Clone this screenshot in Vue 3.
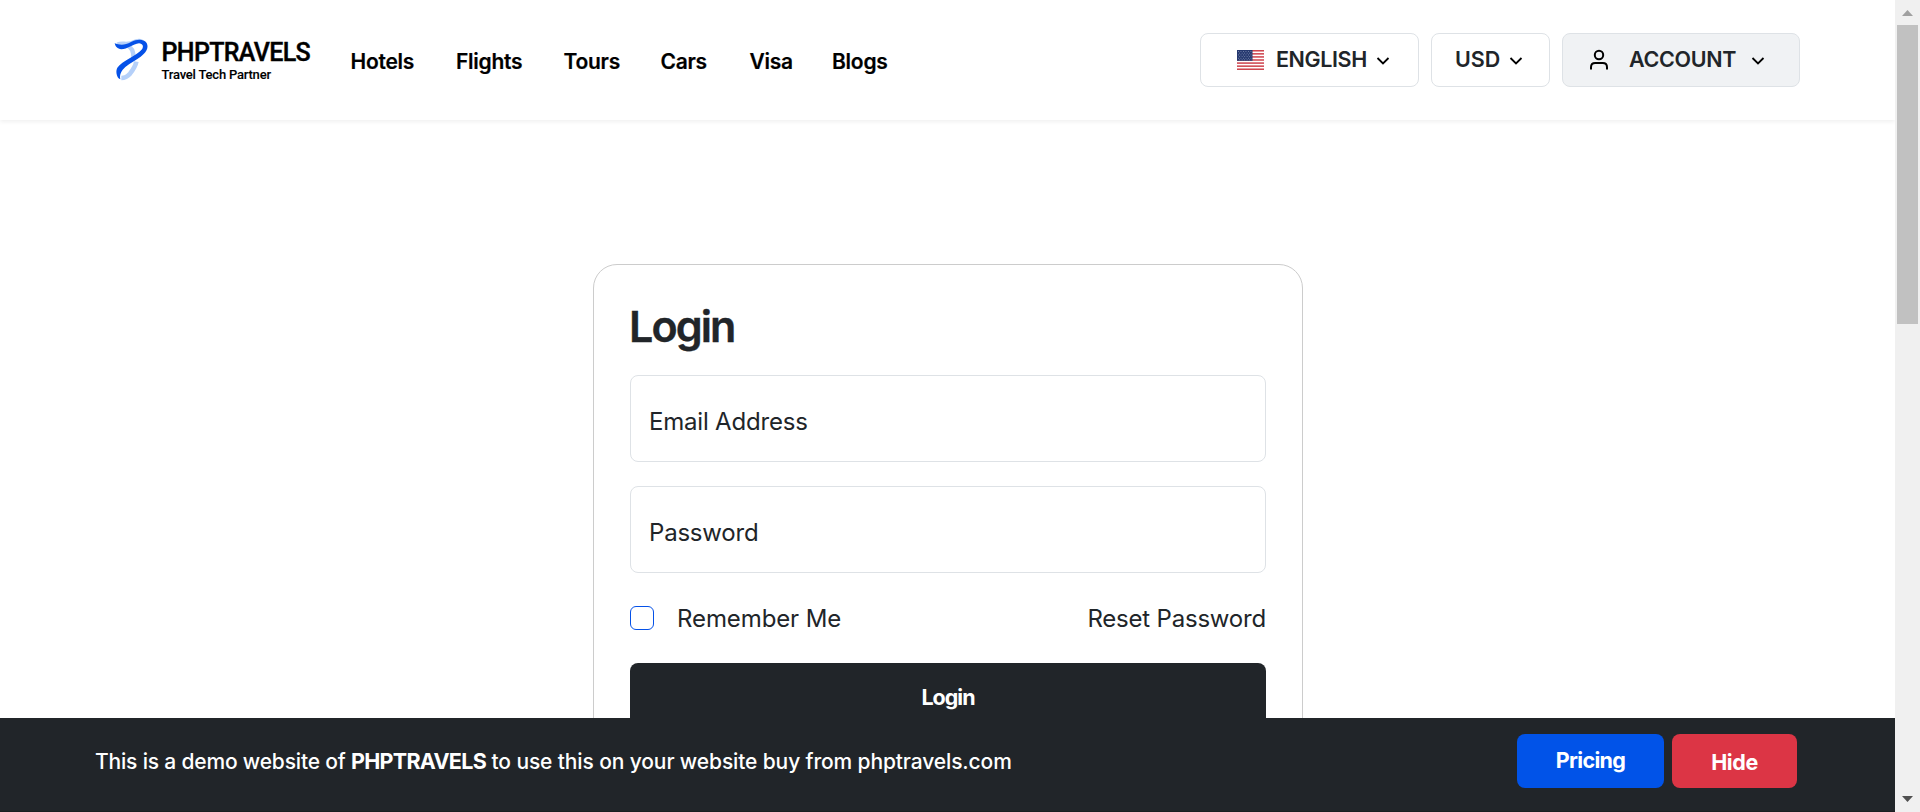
<script setup>
const nav = ['Hotels', 'Flights', 'Tours', 'Cars', 'Visa', 'Blogs']
const stripes = [0, 2, 4, 6, 8, 10, 12]
</script>

<template>
  <div class="window">
    <div class="page">
      <header class="header">
        <a class="brand">
          <svg class="mark" viewBox="25 20 111 132" fill="none">
            <path d="M38 41C50 36 62 41 76 38C88 34 98 26 112 32" stroke="#b5d0f9" stroke-width="10" />
            <path d="M66 44C80 50 88 62 86 84" stroke="#b5d0f9" stroke-width="13" />
            <path d="M95 94C92 110 84 120 76 130C69 138 60 143 50 143" stroke="#b5d0f9" stroke-width="14" />
            <path d="M30 39C44 44 60 46 79 35C98 25 118 26 126 38C134 54 122 68 108 79C94 90 76 98 62 110C50 121 44 132 47 147C34 141 33 120 38 112C52 92 98 76 112 57C118 48 114 40 103 39C85 41 68 57 50 57C38 56 32 48 30 39Z" fill="#0551e8" />
          </svg>
          <span class="brand-text">
            <span class="name">PHPTRAVELS</span>
            <span class="tagline">Travel Tech Partner</span>
          </span>
        </a>
        <nav class="nav">
          <a v-for="item in nav" :key="item">{{ item }}</a>
        </nav>
        <div class="actions">
          <button class="pill language">
            <svg class="flag" viewBox="0 0 27 20">
              <rect width="27" height="20" fill="#fff" />
              <rect v-for="s in stripes" :key="s" x="0" :y="s * 20 / 13" width="27" height="1.54" fill="#cf4650" />
              <rect width="15.5" height="10.8" fill="#25386f" />
              <g stroke="#8b97b8" stroke-width=".8" stroke-dasharray=".9 1.6">
                <path d="M1 1.5H15M2.2 3.2H15M1 4.9H15M2.2 6.6H15M1 8.3H15M2.2 9.8H15" />
              </g>
            </svg>
            <span class="t-lang">ENGLISH</span>
            <svg class="chev" viewBox="0 0 14 10"><path d="M1.5 2L7 7.5L12.5 2" /></svg>
          </button>
          <button class="pill currency">
            <span>USD</span>
            <svg class="chev" viewBox="0 0 14 10"><path d="M1.5 2L7 7.5L12.5 2" /></svg>
          </button>
          <button class="pill account">
            <svg class="user" viewBox="0 0 20 22">
              <circle cx="10" cy="6" r="4.2" />
              <path d="M2 20.5V18.2C2 15.6 3.6 14 6.2 14H13.8C16.4 14 18 15.6 18 18.2V20.5" />
            </svg>
            <span class="t-acc">ACCOUNT</span>
            <svg class="chev" viewBox="0 0 14 10"><path d="M1.5 2L7 7.5L12.5 2" /></svg>
          </button>
        </div>
      </header>

      <main class="main">
        <form class="card">
          <h1>Login</h1>
          <div class="field">Email Address</div>
          <div class="field">Password</div>
          <div class="options">
            <span class="check"></span>
            <span class="label">Remember Me</span>
            <a class="label reset">Reset Password</a>
          </div>
          <button type="button" class="submit">Login</button>
        </form>
      </main>

      <footer class="bar">
        <p><span class="lead">This is a demo website of </span><strong>PHPTRAVELS</strong><span class="rest"> to use this on your website buy from phptravels.com</span></p>
        <button class="btn pricing">Pricing</button>
        <button class="btn hide">Hide</button>
      </footer>
    </div>

    <aside class="scroll">
      <svg viewBox="0 0 25 25"><path d="M7 16L12.5 10L18 16Z" fill="#a0a0a0" /></svg>
      <div class="thumb"></div>
      <svg class="down" viewBox="0 0 25 25"><path d="M7 9L18 9L12.5 15Z" fill="#505050" /></svg>
    </aside>
  </div>
</template>

<style>
body {
  overflow: hidden;
}
</style>

<style scoped>
.window {
  display: flex;
  width: 1920px;
  height: 812px;
  overflow: hidden;
  background: #fff;
  font-family: Inter, "Liberation Sans", sans-serif;
  color: #212529;
}
button {
  font: inherit;
  color: inherit;
  border: 0;
  padding: 0;
  box-sizing: border-box;
}
.page {
  width: 1895px;
  height: 812px;
  display: flex;
  flex-direction: column;
}
.header {
  height: 120px;
  flex: none;
  display: flex;
  box-sizing: border-box;
  padding: 0 95px 0 113px;
  box-shadow: 0 2px 4px rgba(0, 0, 0, .06);
}
.brand {
  display: flex;
  width: 237.5px;
  color: #000;
  font-family: Roboto, sans-serif;
}
.mark {
  width: 37px;
  height: 44px;
  margin-top: 37px;
}
.brand-text {
  margin: 38px 0 0 11.5px;
  display: flex;
  flex-direction: column;
  white-space: nowrap;
}
.name {
  font-size: 25px;
  line-height: 29px;
  font-weight: 500;
  letter-spacing: -.65px;
  -webkit-text-stroke: .4px #000;
}
.tagline {
  font-size: 13px;
  line-height: 15px;
  font-weight: 500;
  letter-spacing: -.2px;
  -webkit-text-stroke: .1px #000;
}
.nav {
  display: grid;
  grid-template-columns: 105.5px 107.5px 97px 89px 82.5px 60px;
  align-items: center;
  height: 122px;
  font-size: 21px;
  font-weight: 600;
  letter-spacing: -.25px;
  color: #000;
  -webkit-text-stroke: .2px #000;
}
.actions {
  margin: 33px 0 0 auto;
  display: flex;
  gap: 12px;
}
.pill {
  height: 54px;
  border: 1px solid #dee2e6;
  border-radius: 8px;
  background: #fff;
  display: flex;
  align-items: center;
  font-size: 21.5px;
  line-height: 52px;
  font-weight: 600;
}
.pill > span {
  height: 54px;
}
.language {
  width: 219px;
  padding-left: 36px;
}
.flag {
  width: 27px;
  height: 20px;
  margin-right: 12px;
}
.t-lang {
  letter-spacing: -.4px;
}
.chev {
  width: 14px;
  height: 10px;
  margin: 1px 0 0 9.5px;
  fill: none;
  stroke: #000;
  stroke-width: 1.8;
}
.currency {
  width: 119px;
  padding-left: 23px;
}
.currency .chev {
  margin-left: 8.5px;
}
.account {
  width: 238px;
  padding-left: 26px;
  background: #f0f2f4;
}
.user {
  width: 20px;
  height: 22px;
  margin-right: 20px;
  fill: none;
  stroke: #000;
  stroke-width: 2;
}
.t-acc {
  letter-spacing: -.3px;
}
.account .chev {
  margin-left: 15px;
}
.main {
  height: 598px;
  overflow: hidden;
  box-sizing: border-box;
  padding: 144px 0 0 593px;
}
.card {
  width: 710px;
  height: 640px;
  box-sizing: border-box;
  border: 1px solid #ccc;
  border-radius: 24px;
  padding: 36px;
}
h1 {
  margin: -1px 0 23px -1px;
  font-size: 43px;
  line-height: 52px;
  font-weight: 600;
  letter-spacing: -1.9px;
  -webkit-text-stroke: .4px #212529;
}
.field {
  height: 87px;
  box-sizing: border-box;
  border: 1px solid #dee2e6;
  border-radius: 8px;
  margin-bottom: 24px;
  padding-left: 18px;
  font-size: 24px;
  line-height: 92px;
  letter-spacing: -.2px;
}
.options {
  display: flex;
  align-items: center;
  height: 24px;
  margin-top: 33px;
  font-size: 24px;
  line-height: 26px;
}
.check {
  width: 24px;
  height: 24px;
  box-sizing: border-box;
  border: 1px solid #0551e8;
  border-radius: 6px;
  margin-right: 23px;
}
.label {
  padding-top: 2px;
  letter-spacing: -.1px;
}
.reset {
  margin-left: auto;
  letter-spacing: -.2px;
}
.submit {
  display: block;
  width: 100%;
  height: 68px;
  margin-top: 33px;
  border-radius: 8px;
  background: #212529;
  color: #fff;
  font-size: 21.5px;
  font-weight: 700;
  letter-spacing: -1px;
}
.bar {
  flex: none;
  height: 94px;
  box-sizing: border-box;
  border-bottom: 1px solid #1a1e21;
  background: #212529;
  color: #fff;
  display: flex;
  align-items: flex-start;
  padding: 16px 98px 0 95px;
}
.bar p {
  margin: 0 auto 0 0;
  font-size: 21px;
  line-height: 54px;
  font-weight: 500;
  white-space: pre;
}
.lead {
  letter-spacing: -.18px;
}
.bar strong {
  font-size: 21.5px;
  font-weight: 700;
  letter-spacing: -.7px;
}
.rest {
  letter-spacing: -.12px;
}
.btn {
  height: 54px;
  border-radius: 8px;
  font-size: 21.5px;
  font-weight: 700;
}
.pricing {
  width: 147px;
  background: #0153e8;
  letter-spacing: -.65px;
  padding-bottom: 2px;
  margin-right: 8px;
}
.hide {
  width: 125px;
  background: #dc3545;
  letter-spacing: -.4px;
  padding-top: 2px;
}
.scroll {
  width: 25px;
  background: #f0f0f0;
  display: flex;
  flex-direction: column;
}
.scroll svg {
  width: 25px;
  height: 25px;
  display: block;
}
.thumb {
  width: 21px;
  height: 299px;
  margin-left: 2px;
  background: #c1c1c1;
}
.scroll .down {
  margin-top: auto;
}
</style>
